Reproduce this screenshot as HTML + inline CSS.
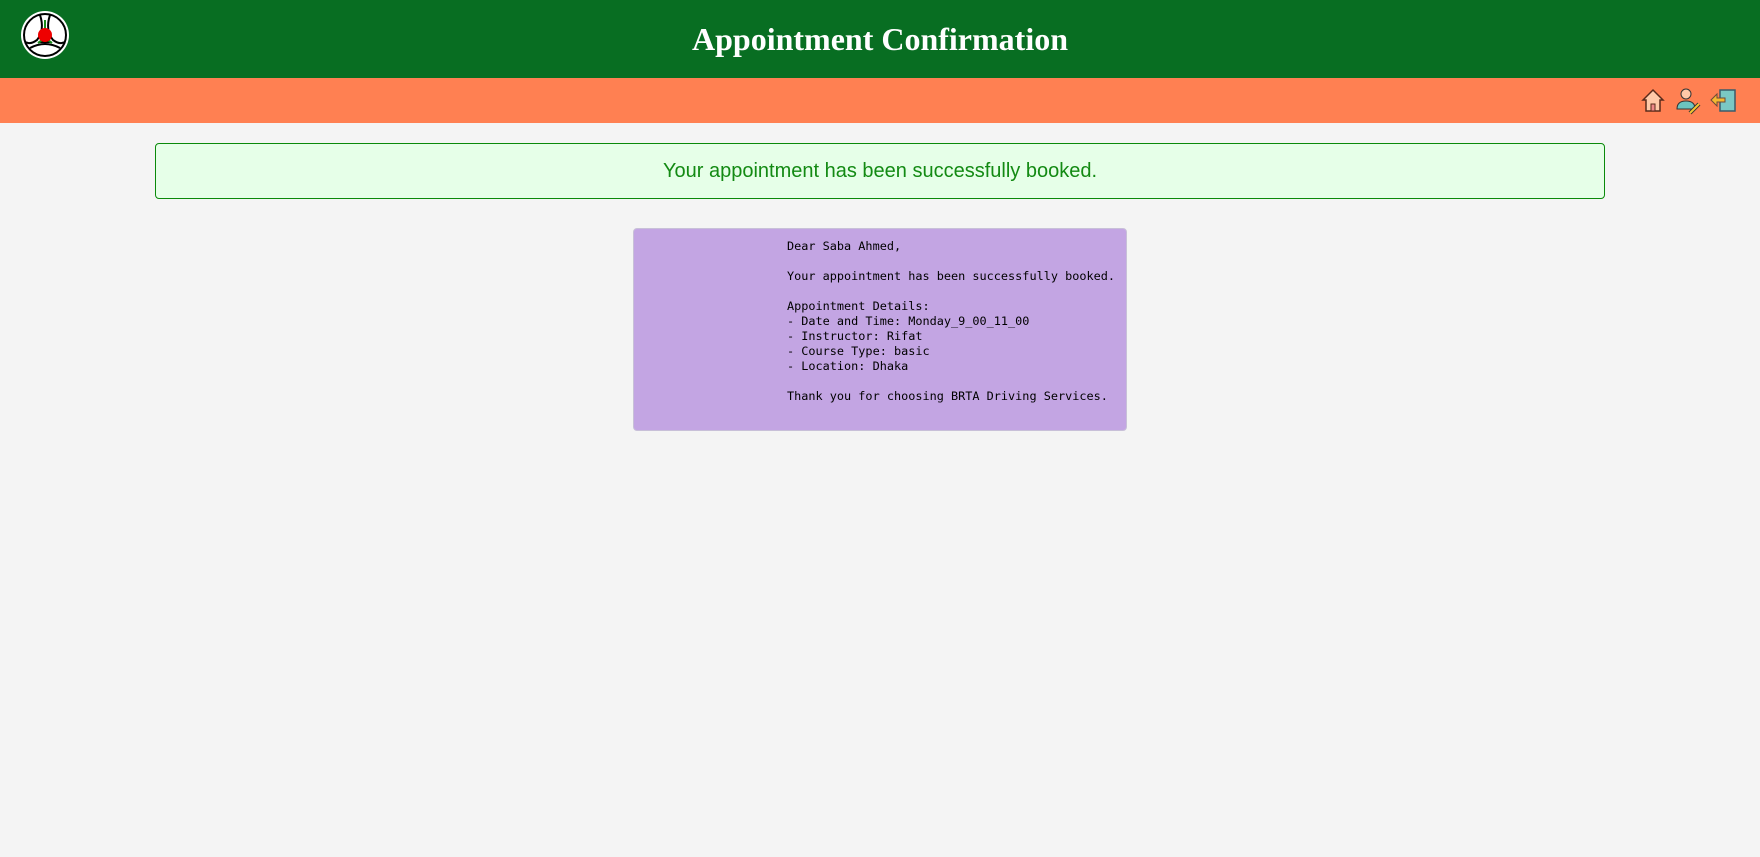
<!DOCTYPE html>
<html><head><style>
body{margin:0;background:#f4f4f4;font-family:"Liberation Sans",sans-serif;width:1760px;height:857px;overflow:hidden}
.hd{height:78px;background:#086e22;position:relative}
.hd h1{margin:0;text-align:center;line-height:78px;color:#fff;font-family:"Liberation Serif",serif;font-size:32px;font-weight:bold}
.logo{position:absolute;left:20px;top:10px}
.nav{height:45px;background:#ff8052;position:relative}
.nav svg{position:absolute;top:9px}
.msg{position:absolute;left:155px;top:143px;width:1448px;height:54px;border:1px solid #0a8a0a;border-radius:4px;background:#e6ffe8;color:#138a13;font-size:20px;text-align:center;line-height:54px}
.box{position:absolute;left:633px;top:228px;width:492px;height:201px;background:#c3a5e3;border:1px solid #c8c0d8;border-radius:4px}
.box pre{margin:0;position:absolute;left:153px;top:10px;font-family:"DejaVu Sans Mono","Liberation Mono",monospace;font-size:11.85px;line-height:15px;color:#000}
</style></head><body>
<div class="hd">
<svg class="logo" width="50" height="50" viewBox="0 0 50 50"><circle cx="25" cy="25" r="24" fill="#fff"/><circle cx="25" cy="25" r="21" fill="none" stroke="#000" stroke-width="2"/><path d="M20 5 Q25 20 17 30 Q10 35 6 32 M30 5 Q25 20 33 30 Q40 35 44 32 M10 38 Q25 30 40 38" fill="none" stroke="#000" stroke-width="2"/><path d="M25 10 L25 24 M18 33 L25 28 L32 33" stroke="#1a8a1a" stroke-width="2"/><circle cx="25" cy="25" r="7" fill="#e00"/></svg>
<h1>Appointment Confirmation</h1></div>
<div class="nav">
<svg style="left:1640px" width="26" height="26" viewBox="0 0 26 26"><path d="M3 13 L13 3 L23 13 L20 13 L20 24 L6 24 L6 13Z" fill="#ffc9a8" stroke="#5a2a1a" stroke-width="1.5"/><rect x="11" y="17" width="4" height="7" fill="#e88" stroke="#5a2a1a"/></svg>
<svg style="left:1674px" width="28" height="28" viewBox="0 0 28 28"><circle cx="12" cy="7" r="5" fill="#ffc9a8" stroke="#333"/><path d="M3 22 Q3 14 12 14 Q21 14 21 22Z" fill="#6cc4c0" stroke="#333"/><path d="M16 26 L25 17" stroke="#333" stroke-width="4"/><path d="M16 26 L25 17" stroke="#f4c430" stroke-width="2"/></svg>
<svg style="left:1708px" width="30" height="28" viewBox="0 0 30 28"><rect x="12" y="3" width="15" height="21" fill="#7ac8c4" stroke="#3a5a6a" stroke-width="1.5"/><path d="M3 13 L9 7 L9 11 L17 11 L17 15 L9 15 L9 19Z" fill="#f4b830" stroke="#6a4a3a"/></svg>
</div>
<div class="msg">Your appointment has been successfully booked.</div>
<div class="box"><pre>Dear Saba Ahmed,

Your appointment has been successfully booked.

Appointment Details:
- Date and Time: Monday_9_00_11_00
- Instructor: Rifat
- Course Type: basic
- Location: Dhaka

Thank you for choosing BRTA Driving Services.</pre></div>
</body></html>
